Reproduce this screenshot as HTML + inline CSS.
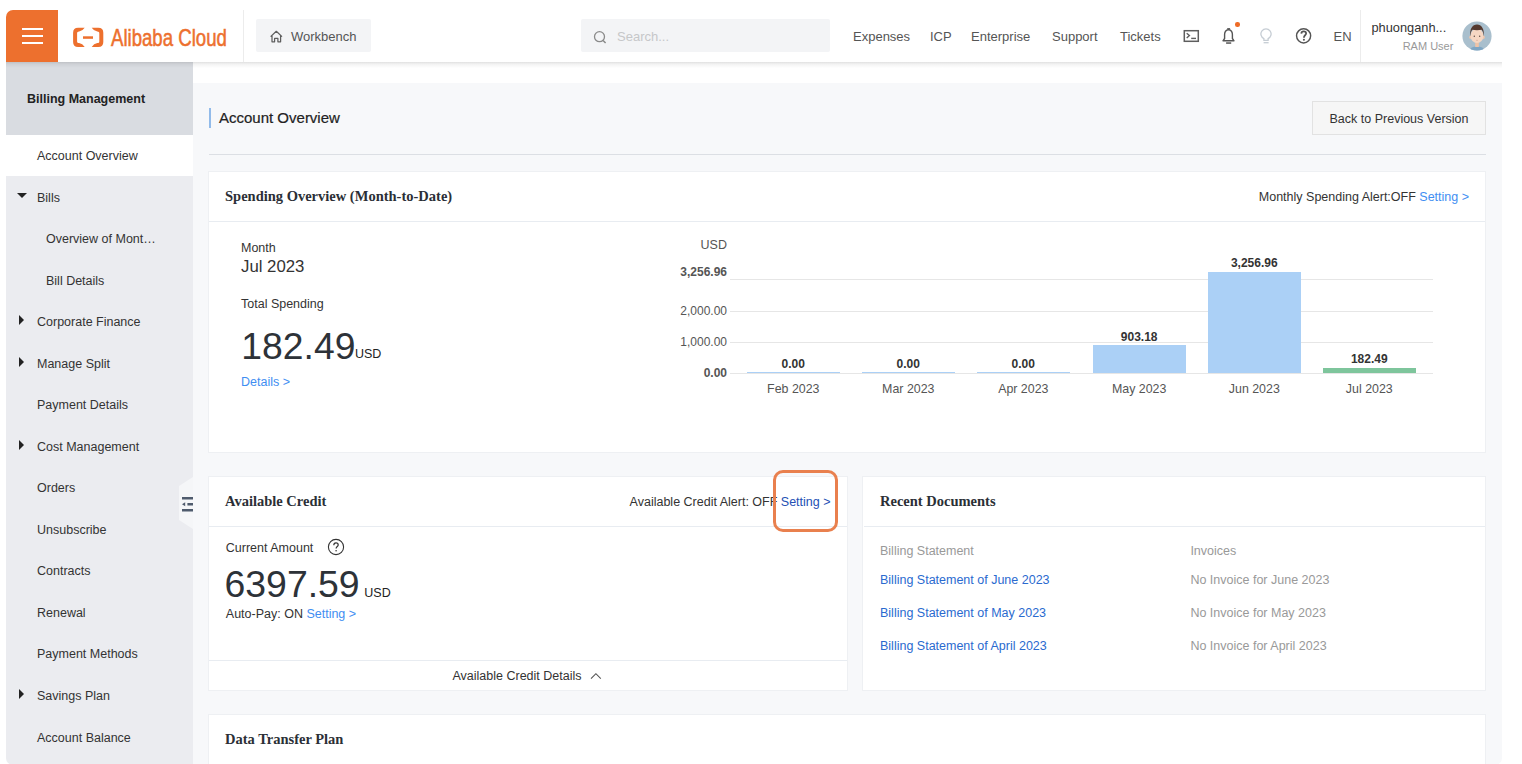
<!DOCTYPE html>
<html><head><meta charset="utf-8">
<style>
*{box-sizing:border-box;margin:0;padding:0}
html,body{width:1522px;height:764px;overflow:hidden;background:#fff;font-family:"Liberation Sans",sans-serif;color:#333}
.a{position:absolute}
.t{position:absolute;line-height:1;white-space:nowrap}
.s{font-family:"Liberation Serif",serif;font-weight:bold;font-size:14.5px;color:#2b2f36;margin-top:1px}
.b{font-size:12.5px;color:#333;margin-top:1px}
.nav{font-size:13px;color:#555}
.lk{color:#3f8ef2}
.card{position:absolute;background:#fff;border:1px solid #eef0f3}
.sb{font-size:12.5px;color:#333}
.tri-d{position:absolute;width:0;height:0;border-left:5px solid transparent;border-right:5px solid transparent;border-top:5.5px solid #222}
.tri-r{position:absolute;width:0;height:0;border-top:5px solid transparent;border-bottom:5px solid transparent;border-left:5.5px solid #222}
.grid{position:absolute;left:730px;width:703px;height:1px;background:#e6e6e6}
.bar{position:absolute;width:93px;background:#abd0f6}
.vl{position:absolute;line-height:1;white-space:nowrap;font-size:12px;font-weight:bold;color:#333;width:93px;text-align:center}
.ml{position:absolute;line-height:1;white-space:nowrap;font-size:12.4px;color:#555;width:93px;text-align:center}
.yl{position:absolute;line-height:1;white-space:nowrap;font-size:12px;color:#555;right:795px;text-align:right}
</style></head><body>

<!-- content area -->
<div class="a" style="left:193px;top:83px;width:1309px;height:682px;background:#f7f8fa;border-bottom-right-radius:7px"></div>

<!-- sidebar -->
<div class="a" style="left:6px;top:62px;width:187px;height:703px;background:#ebecf0;border-bottom-left-radius:7px"></div>
<div class="a" style="left:6px;top:62px;width:187px;height:73px;background:#d9dce1"></div>
<div class="a" style="left:6px;top:135px;width:187px;height:41px;background:#fff"></div>
<div class="t" style="left:27px;top:92.8px;font-size:12.5px;font-weight:bold;color:#222">Billing Management</div>
<div class="t sb" style="left:37px;top:150px">Account Overview</div>
<div class="tri-d" style="left:16.6px;top:192.6px"></div>
<div class="t sb" style="left:37px;top:192px">Bills</div>
<div class="t sb" style="left:46px;top:233px">Overview of Mont…</div>
<div class="t sb" style="left:46px;top:275px">Bill Details</div>
<div class="tri-r" style="left:18.8px;top:315px"></div>
<div class="t sb" style="left:37px;top:316px">Corporate Finance</div>
<div class="tri-r" style="left:18.8px;top:356.5px"></div>
<div class="t sb" style="left:37px;top:358px">Manage Split</div>
<div class="t sb" style="left:37px;top:399px">Payment Details</div>
<div class="tri-r" style="left:18.8px;top:439.5px"></div>
<div class="t sb" style="left:37px;top:441px">Cost Management</div>
<div class="t sb" style="left:37px;top:482px">Orders</div>
<div class="t sb" style="left:37px;top:524px">Unsubscribe</div>
<div class="t sb" style="left:37px;top:565px">Contracts</div>
<div class="t sb" style="left:37px;top:607px">Renewal</div>
<div class="t sb" style="left:37px;top:648px">Payment Methods</div>
<div class="tri-r" style="left:18.8px;top:689px"></div>
<div class="t sb" style="left:37px;top:690px">Savings Plan</div>
<div class="t sb" style="left:37px;top:732px">Account Balance</div>

<!-- collapse tab -->
<svg class="a" style="left:178px;top:476px" width="16" height="54" viewBox="0 0 16 54">
<polygon points="15,1 1,10 1,44 15,53" fill="#f5f6f8"/>
<rect x="4" y="21" width="11" height="2.5" fill="#4f5b6d"/>
<rect x="9.4" y="27" width="5.6" height="2.5" fill="#4f5b6d"/>
<polygon points="4,28.25 7.2,26.2 7.2,30.3" fill="#4f5b6d"/>
<rect x="4" y="33" width="11" height="2.5" fill="#4f5b6d"/>
</svg>

<!-- header -->
<div class="a" style="left:6px;top:10px;width:1496px;height:52px;background:#fff;border-top-left-radius:7px;border-top-right-radius:7px"></div>
<div class="a" style="left:6px;top:62px;width:1496px;height:6px;background:linear-gradient(rgba(0,0,0,0.12),rgba(0,0,0,0.05) 35%,rgba(0,0,0,0))"></div>
<div class="a" style="left:6px;top:10px;width:52px;height:52px;background:#ed702e;border-top-left-radius:7px"></div>
<div class="a" style="left:22px;top:28px;width:21px;height:2px;background:#fff"></div>
<div class="a" style="left:22px;top:35px;width:21px;height:2px;background:#fff"></div>
<div class="a" style="left:22px;top:42px;width:21px;height:2px;background:#fff"></div>
<svg class="a" style="left:70px;top:24px" width="38" height="28" viewBox="0 0 38 28">
<path d="M14.7,3.8 L8.1,3.8 Q3.1,3.8 3.1,8.8 L3.1,17.9 Q3.1,22.9 8.1,22.9 L14.7,22.9 Q12.6,19.8 9.1,19.1 L8.1,18.9 Q7.1,18.8 7.1,17.8 L7.1,8.9 Q7.1,7.9 8.1,7.7 L9.1,7.6 Q12.6,7 14.7,3.8 Z" fill="#ed702e"/>
<path d="M21.7,3.8 L28.3,3.8 Q33.3,3.8 33.3,8.8 L33.3,17.9 Q33.3,22.9 28.3,22.9 L21.7,22.9 Q23.8,19.8 27.3,19.1 L28.3,18.9 Q29.3,18.8 29.3,17.8 L29.3,8.9 Q29.3,7.9 28.3,7.7 L27.3,7.6 Q23.8,7 21.7,3.8 Z" fill="#ed702e"/>
<rect x="13" y="12.3" width="10" height="2.5" fill="#ed702e"/>
</svg>
<div class="t" style="left:111px;top:25.7px;font-size:24px;color:#ed702e;-webkit-text-stroke:0.55px #ed702e;transform:scaleX(0.775);transform-origin:0 0">Alibaba Cloud</div>
<div class="a" style="left:243px;top:10px;width:1px;height:52px;background:#ececec"></div>
<div class="a" style="left:256px;top:19px;width:115px;height:33px;background:#f3f4f6;border-radius:2px"></div>
<svg class="a" style="left:269px;top:29px" width="14" height="14" viewBox="0 0 14 14">
<path d="M1.6,7.6 L7.3,2.3 L13,7.6 M3,6.4 L3,12.8 L5.6,12.8 L5.6,9.4 L8.9,9.4 L8.9,12.8 L11.6,12.8 L11.6,6.4" fill="none" stroke="#5e5e5e" stroke-width="1.25" stroke-linejoin="round"/>
</svg>
<div class="t nav" style="left:291px;top:30.3px">Workbench</div>
<div class="a" style="left:581px;top:19px;width:249px;height:33px;background:#f3f4f6;border-radius:2px"></div>
<svg class="a" style="left:593px;top:30px" width="15" height="15" viewBox="0 0 15 15">
<circle cx="6.5" cy="6.7" r="5" fill="none" stroke="#8a8a8a" stroke-width="1.3"/>
<path d="M10.1,10.4 L12.6,13" stroke="#8a8a8a" stroke-width="1.4"/>
</svg>
<div class="t" style="left:617px;top:30.3px;font-size:13px;color:#c6c7c9">Search...</div>
<div class="t nav" style="left:853px;top:30.3px">Expenses</div>
<div class="t nav" style="left:930px;top:30.3px">ICP</div>
<div class="t nav" style="left:971px;top:30.3px">Enterprise</div>
<div class="t nav" style="left:1052px;top:30.3px">Support</div>
<div class="t nav" style="left:1120px;top:30.3px">Tickets</div>
<svg class="a" style="left:1182px;top:29px" width="18" height="14" viewBox="0 0 18 14">
<rect x="2.3" y="1.7" width="14" height="10.6" fill="none" stroke="#5e5e5e" stroke-width="1.5"/>
<path d="M4.7,4.3 L7.4,6.5 L4.7,8.9" fill="none" stroke="#5e5e5e" stroke-width="1.4"/>
<path d="M9.2,9.4 L14,9.4" stroke="#5e5e5e" stroke-width="1.4"/>
</svg>
<svg class="a" style="left:1221px;top:26px" width="15" height="19" viewBox="0 0 15 19">
<path d="M7.5,3.8 C4.8,3.8 3.6,6 3.6,8.5 L3.6,12.5 L2,14.8 L13,14.8 L11.4,12.5 L11.4,8.5 C11.4,6 10.2,3.8 7.5,3.8 Z" fill="none" stroke="#555" stroke-width="1.4" stroke-linejoin="round"/>
<path d="M6.2,2.9 L9.1,2.9" stroke="#555" stroke-width="1.6"/>
<path d="M5.1,17.05 L10.2,17.05" stroke="#555" stroke-width="1.5"/>
</svg>
<div class="a" style="left:1235px;top:22.3px;width:4.5px;height:4.5px;border-radius:50%;background:#ee6b26"></div>
<svg class="a" style="left:1259px;top:27px" width="15" height="18" viewBox="0 0 15 18">
<path d="M4.9,11.6 A5.1,5.1 0 1 1 9.1,11.6 L9.1,13.4 L4.9,13.4 Z" fill="none" stroke="#c6cdd4" stroke-width="1.3"/>
<path d="M4.6,15.7 L9.6,15.7" stroke="#c6cdd4" stroke-width="1.3"/>
</svg>
<svg class="a" style="left:1295px;top:27px" width="18" height="18" viewBox="0 0 18 18">
<circle cx="8.6" cy="8.85" r="7.05" fill="none" stroke="#555" stroke-width="1.45"/>
<path d="M6.3,6.6 C6.4,5 7.4,4.3 8.7,4.3 C10.1,4.3 11.1,5.2 11.1,6.5 C11.1,8.1 9,8.4 8.9,10.8" fill="none" stroke="#555" stroke-width="1.8"/>
<circle cx="8.9" cy="12.7" r="1.05" fill="#555"/>
</svg>
<div class="t nav" style="left:1333.5px;top:30.2px">EN</div>
<div class="a" style="left:1360px;top:10px;width:1px;height:52px;background:#ececec"></div>
<div class="t" style="left:1371.5px;top:22.4px;font-size:12.8px;color:#333">phuonganh...</div>
<div class="t" style="left:1390px;top:41.1px;width:63.4px;text-align:right;font-size:11px;color:#999">RAM User</div>
<svg class="a" style="left:1462px;top:21px" width="30" height="30" viewBox="0 0 30 30">
<defs><clipPath id="cc"><circle cx="15" cy="15" r="14.6"/></clipPath></defs>
<circle cx="15" cy="15" r="14.6" fill="#a9bfcd"/>
<g clip-path="url(#cc)">
<path d="M7.5,30 C8,27 10.5,25.6 15,25.6 C19.5,25.6 22,27 22.5,30 Z" fill="#7fa6c4"/>
<rect x="13.2" y="20" width="3.6" height="6" fill="#efc3a7"/>
<ellipse cx="8.4" cy="16.2" rx="1.1" ry="1.7" fill="#f0c6ab"/>
<ellipse cx="21.6" cy="16.2" rx="1.1" ry="1.7" fill="#f0c6ab"/>
<ellipse cx="15" cy="14.8" rx="6.4" ry="7.2" fill="#f6d7c3"/>
<path d="M8.3,15.5 C7.4,8 10.5,3.6 15,3.6 C19.5,3.6 22.6,8 21.7,15.5 C21.3,12 20.8,9.6 19.6,8.8 C17,9.3 13,9.3 10.4,8.8 C9.2,9.6 8.7,12 8.3,15.5 Z" fill="#54392f"/>
<circle cx="12.3" cy="15.2" r="0.7" fill="#5a4a42"/>
<circle cx="17.7" cy="15.2" r="0.7" fill="#5a4a42"/>
<path d="M14,19.3 L16,19.3" stroke="#d9a58e" stroke-width="0.6"/>
</g>
</svg>

<!-- page title -->
<div class="a" style="left:209px;top:108px;width:2px;height:20px;background:#92bbea"></div>
<div class="t" style="left:219px;top:110.4px;font-size:15px;color:#222;-webkit-text-stroke:0.2px #222">Account Overview</div>
<div class="a" style="left:1312px;top:101px;width:174px;height:34px;background:#f6f6f6;border:1px solid #e2e2e2"></div>
<div class="t b" style="left:1312px;top:112.4px;width:174px;text-align:center">Back to Previous Version</div>
<div class="a" style="left:208.5px;top:154px;width:1277.5px;height:1px;background:#dcdfe4"></div>

<!-- card 1: spending overview -->
<div class="card" style="left:208px;top:171px;width:1278px;height:282px"></div>
<div class="a" style="left:209px;top:221px;width:1276px;height:1px;background:#e8ecf1"></div>
<div class="t s" style="left:225px;top:188.4px">Spending Overview (Month-to-Date)</div>
<div class="t b" style="left:1069px;top:190px;width:400px;text-align:right">Monthly Spending Alert:OFF <span class="lk">Setting &gt;</span></div>
<div class="t b" style="left:241px;top:240.7px">Month</div>
<div class="t" style="left:241px;top:258.6px;font-size:16.8px;color:#333">Jul 2023</div>
<div class="t b" style="left:241px;top:297.4px">Total Spending</div>
<div class="t" style="left:241.3px;top:328px;font-size:37.3px;color:#2d3238">182.49</div>
<div class="t" style="left:355px;top:348px;font-size:12.5px;color:#222">USD</div>
<div class="t b lk" style="left:241px;top:375.2px">Details &gt;</div>

<!-- chart -->
<div class="yl" style="top:238.8px;font-size:12.5px">USD</div>
<div class="yl" style="top:265.6px;font-weight:bold;color:#555">3,256.96</div>
<div class="yl" style="top:304.6px">2,000.00</div>
<div class="yl" style="top:336.1px">1,000.00</div>
<div class="yl" style="top:367.4px;font-weight:bold;color:#555">0.00</div>
<div class="grid" style="top:279px"></div>
<div class="grid" style="top:310.5px"></div>
<div class="grid" style="top:342px"></div>
<div class="grid" style="top:373px"></div>
<div class="bar" style="left:746.8px;top:371.5px;height:1.5px"></div>
<div class="bar" style="left:861.8px;top:371.5px;height:1.5px"></div>
<div class="bar" style="left:976.8px;top:371.5px;height:1.5px"></div>
<div class="bar" style="left:1092.7px;top:345px;height:28px"></div>
<div class="bar" style="left:1207.8px;top:271.6px;height:101.4px"></div>
<div class="bar" style="left:1322.8px;top:367.6px;height:5.4px;background:#7ec59c"></div>
<div class="vl" style="left:746.8px;top:357.8px">0.00</div>
<div class="vl" style="left:861.8px;top:357.8px">0.00</div>
<div class="vl" style="left:976.8px;top:357.8px">0.00</div>
<div class="vl" style="left:1092.7px;top:331.2px">903.18</div>
<div class="vl" style="left:1207.8px;top:257.3px">3,256.96</div>
<div class="vl" style="left:1322.8px;top:353.3px">182.49</div>
<div class="ml" style="left:746.8px;top:382.5px">Feb 2023</div>
<div class="ml" style="left:861.8px;top:382.5px">Mar 2023</div>
<div class="ml" style="left:976.8px;top:382.5px">Apr 2023</div>
<div class="ml" style="left:1092.7px;top:382.5px">May 2023</div>
<div class="ml" style="left:1207.8px;top:382.5px">Jun 2023</div>
<div class="ml" style="left:1322.8px;top:382.5px">Jul 2023</div>

<!-- card 2: available credit -->
<div class="card" style="left:208px;top:476px;width:640px;height:215px"></div>
<div class="a" style="left:209px;top:526px;width:638px;height:1px;background:#e8ecf1"></div>
<div class="t s" style="left:225px;top:493.4px">Available Credit</div>
<div class="t b" style="left:430px;top:494.9px;width:400.5px;text-align:right">Available Credit Alert: OFF <span style="color:#2450b4">Setting &gt;</span></div>
<div class="a" style="left:772.8px;top:470px;width:65px;height:62px;border:3px solid #e9804e;border-radius:10px"></div>
<div class="t b" style="left:225.8px;top:541.1px">Current Amount</div>
<svg class="a" style="left:327px;top:538px" width="18" height="18" viewBox="0 0 18 18">
<circle cx="9" cy="9" r="7.6" fill="none" stroke="#333" stroke-width="1.1"/>
<path d="M6.8,7.2 C6.8,5.6 7.8,4.9 9,4.9 C10.2,4.9 11.2,5.7 11.2,6.9 C11.2,8.4 9.1,8.6 9.1,10.6" fill="none" stroke="#333" stroke-width="1.2"/>
<circle cx="9.1" cy="12.7" r="0.8" fill="#333"/>
</svg>
<div class="t" style="left:224.5px;top:566px;font-size:37.4px;color:#2d3238">6397.59</div>
<div class="t" style="left:364.3px;top:587.3px;font-size:12.5px;color:#222">USD</div>
<div class="t b" style="left:225.8px;top:607.4px">Auto-Pay: ON <span class="lk">Setting &gt;</span></div>
<div class="a" style="left:209px;top:660px;width:638px;height:1px;background:#e8ecf1"></div>
<div class="t b" style="left:452.5px;top:669.4px">Available Credit Details</div>
<svg class="a" style="left:589px;top:670px" width="14" height="10" viewBox="0 0 14 10">
<path d="M2,8.6 L6.9,3.7 L11.8,8.6" fill="none" stroke="#555" stroke-width="1.1"/>
</svg>

<!-- card 3: recent documents -->
<div class="card" style="left:862px;top:476px;width:624px;height:215px"></div>
<div class="a" style="left:864px;top:526px;width:621px;height:1px;background:#e8ecf1"></div>
<div class="t s" style="left:880px;top:492.9px">Recent Documents</div>
<div class="t b" style="left:880px;top:544.4px;color:#999">Billing Statement</div>
<div class="t b" style="left:1190.4px;top:544px;color:#999">Invoices</div>
<div class="t b" style="left:880px;top:573.3px;color:#2a6acf">Billing Statement of June 2023</div>
<div class="t b" style="left:880px;top:606.4px;color:#2a6acf">Billing Statement of May 2023</div>
<div class="t b" style="left:880px;top:639.4px;color:#2a6acf">Billing Statement of April 2023</div>
<div class="t b" style="left:1190.4px;top:573.2px;color:#999">No Invoice for June 2023</div>
<div class="t b" style="left:1190.4px;top:606.3px;color:#999">No Invoice for May 2023</div>
<div class="t b" style="left:1190.4px;top:639.4px;color:#999">No Invoice for April 2023</div>

<!-- card 4 -->
<div class="card" style="left:208px;top:714px;width:1278px;height:60px"></div>
<div class="t s" style="left:225px;top:730.9px">Data Transfer Plan</div>

</body></html>
